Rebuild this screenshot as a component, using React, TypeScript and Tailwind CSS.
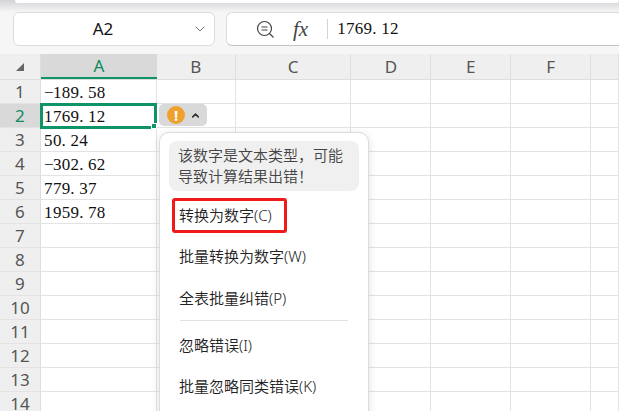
import { ChevronDown, ChevronUp } from "lucide-react"

const columns = [
  { name: "A", width: "w-[116px]" },
  { name: "B", width: "w-[79px]" },
  { name: "C", width: "w-[116px]" },
  { name: "D", width: "w-[80px]" },
  { name: "E", width: "w-[80px]" },
  { name: "F", width: "w-[80px]" },
  { name: "", width: "w-[28px]" },
]

const values = ["-189.58", "1769.12", "50.24", "-302.62", "779.37", "1959.78"]
const rows = Array.from({ length: 14 }, (_, i) => i + 1)

const UI_FONT = "font-['Noto_Sans','Noto_Sans_CJK_SC',sans-serif]"

// numbers in the sheet are a fixed pitch serif
function CellText({ text }: { text: string }) {
  return (
    <span className="flex font-['Liberation_Serif','Noto_Serif_CJK_SC',serif] text-[17px] leading-none text-[#111]">
      {text.split("").map((ch, i) => (
        <span key={i} className={ch === "." ? "inline-block w-[8.8px] text-left" : "inline-block w-[8.8px] text-center"}>
          {ch === "-" ? "−" : ch}
        </span>
      ))}
    </span>
  )
}

function MenuItem({ children, className }: { children: string; className: string }) {
  return <div className={`pl-[19px] text-[15px] font-[350] leading-[22px] text-[#222] ${className}`}>{children}</div>
}

export default function App() {
  return (
    <div className={`relative flex h-[411px] w-[619px] flex-col overflow-hidden bg-[#f6f6f6] ${UI_FONT}`}>
      {/* toolbar edge */}
      <div className="h-[12px] flex-shrink-0 bg-gradient-to-b from-[#d3d3d8] to-[#f6f6f6]">
        <div className="ml-[15px] h-[3px] rounded-b-[8px] bg-white" />
      </div>

      {/* name box + formula bar */}
      <div className="flex h-[34px] flex-shrink-0 gap-[11px] pl-[13px]">
        <div className="relative flex w-[202px] items-center justify-center rounded-[6px] border border-[#dcdcdc] bg-white pr-[22px]">
          <span className="text-[17px] text-[#111]">A2</span>
          <ChevronDown className="absolute right-[6px] h-[16px] w-[16px] text-[#777]" strokeWidth={1.5} />
        </div>
        <div className="flex flex-1 items-center rounded-l-[6px] border-y border-l border-[#dcdcdc] border-b-[#c4c4c4] bg-white">
          <svg className="ml-[29px] h-[19px] w-[19px] text-[#444]" viewBox="0 0 19 19" fill="none" stroke="currentColor" strokeWidth="1.2">
            <circle cx="8.5" cy="8.5" r="7" />
            <path d="M5.5 7h6M5.5 10h6M13.5 13.5l4 4" />
          </svg>
          <span className="ml-[18px] w-[34px] font-['Liberation_Serif',serif] text-[21px] italic leading-none text-[#444]">fx</span>
          <div className="h-[20px] w-px bg-[#d4d4d4]" />
          <div className="ml-[9px] -mt-[1px]">
            <CellText text="1769.12" />
          </div>
        </div>
      </div>

      {/* sheet */}
      <div className="relative mt-[8px] flex-1 bg-white">
        <div className="flex h-[26px] border-b border-[#dedede] bg-[#efefef]">
          <div className="flex w-[41px] items-center justify-center border-r border-[#dedede] pl-[1px]">
            <div className="mt-[1px] h-0 w-0 border-b-[8px] border-l-[8px] border-b-[#666] border-l-transparent" />
          </div>
          {columns.map((col) => (
            <div
              key={col.name}
              className={
                col.name === "A"
                  ? `flex ${col.width} items-center justify-center border-b-2 border-[#0f9467] bg-[#d9d9d9] text-[17px] text-[#0f8a60]`
                  : `flex ${col.width} items-center justify-center border-r border-[#dedede] text-[17px] text-[#555]`
              }
            >
              {col.name}
            </div>
          ))}
        </div>

        {rows.map((row) => (
          <div key={row} className="flex h-[24px] border-b border-[#e3e3e3]">
            <div
              className={
                row === 2
                  ? "flex w-[41px] items-center justify-center border-r border-[#dedede] bg-[#d9d9d9] text-[17px] text-[#0f8a60]"
                  : "flex w-[41px] items-center justify-center border-r border-[#dedede] bg-[#efefef] text-[17px] text-[#555]"
              }
            >
              {row}
            </div>
            {columns.map((col) => (
              <div key={col.name} className={`flex ${col.width} items-center border-r border-[#e3e3e3] pl-[3px] pt-[2px]`}>
                {col.name === "A" && values[row - 1] && <CellText text={values[row - 1]} />}
              </div>
            ))}
          </div>
        ))}

        {/* selected cell */}
        <div className="absolute left-[40px] top-[49px] h-[26px] w-[117px] border-[3px] border-[#0f9467]">
          <div className="absolute -bottom-[3px] -right-[3px] h-[6px] w-[6px] border border-white bg-[#0f9467]" />
        </div>

        {/* error chip */}
        <div className="absolute left-[159px] top-[50px] flex h-[22px] w-[48px] items-center rounded-[5px] bg-[#d9d9d9] pl-[8px]">
          <div className="flex h-[18px] w-[18px] items-center justify-center rounded-full bg-[#f0a02c] text-[15px] font-bold leading-none text-white">!</div>
          <ChevronUp className="ml-[5px] h-[11px] w-[11px] text-[#333]" strokeWidth={3.5} />
        </div>

        {/* error menu */}
        <div className="absolute left-[159px] top-[78px] h-[300px] w-[210px] rounded-[10px] border border-[#dcdcdc] bg-white shadow-[0_2px_8px_rgba(0,0,0,0.12)]">
          <div className="mx-[9px] mt-[8px] h-[50px] rounded-[8px] bg-[#f0f0f0] pl-[9px] pr-[10px] pt-[4px] text-[15px] font-[350] leading-[21px] text-[#444]">
            该数字是文本类型，可能导致计算结果出错！
          </div>
          <div className="relative">
            <MenuItem className="mt-[13px]">转换为数字(C)</MenuItem>
            <div className="absolute left-[12px] top-[-6px] h-[35px] w-[115px] rounded-[3px] border-[3px] border-[#f01a1a]" />
          </div>
          <MenuItem className="mt-[19px]">批量转换为数字(W)</MenuItem>
          <MenuItem className="mt-[20px]">全表批量纠错(P)</MenuItem>
          <div className="mx-[20px] mt-[11px] h-px w-[168px] bg-[#e2e2e2]" />
          <MenuItem className="mt-[13px]">忽略错误(I)</MenuItem>
          <MenuItem className="mt-[19px]">批量忽略同类错误(K)</MenuItem>
        </div>
      </div>
    </div>
  )
}
